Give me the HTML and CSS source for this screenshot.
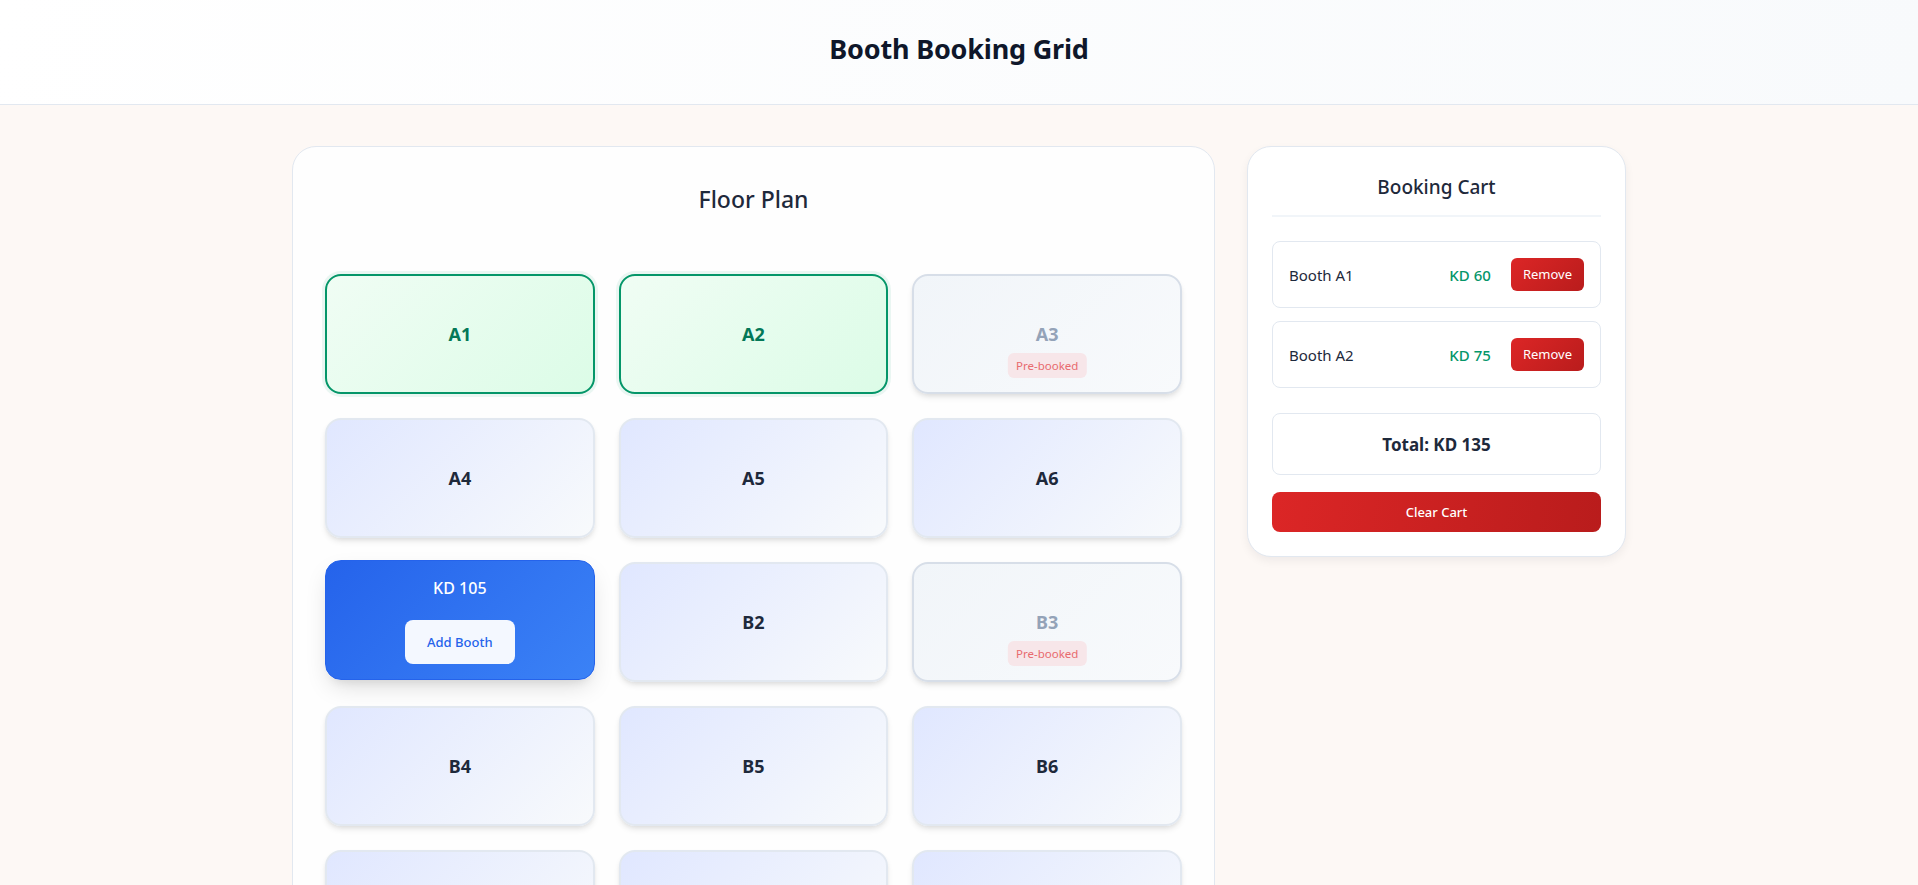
FILE: index.html
```html
<!DOCTYPE html>
<html lang="en">
<head>
<meta charset="utf-8">
<title>Booth Booking Grid</title>
<link rel="stylesheet" href="styles.css">
</head>
<body>
<header class="topbar">
  <h1 class="topbar-title">Booth Booking Grid</h1>
</header>
<main class="layout">
  <section class="floor">
    <h2 class="floor-title">Floor Plan</h2>
    <div class="booth-grid">
      <div class="booth booth-added"><span class="booth-label">A1</span></div>
      <div class="booth booth-added"><span class="booth-label">A2</span></div>
      <div class="booth booth-pre"><span class="booth-label">A3</span><span class="badge">Pre-booked</span></div>
      <div class="booth"><span class="booth-label">A4</span></div>
      <div class="booth"><span class="booth-label">A5</span></div>
      <div class="booth"><span class="booth-label">A6</span></div>
      <div class="booth booth-active">
        <span class="booth-price">KD 105</span>
        <button class="add-btn">Add Booth</button>
      </div>
      <div class="booth"><span class="booth-label">B2</span></div>
      <div class="booth booth-pre"><span class="booth-label">B3</span><span class="badge">Pre-booked</span></div>
      <div class="booth"><span class="booth-label">B4</span></div>
      <div class="booth"><span class="booth-label">B5</span></div>
      <div class="booth"><span class="booth-label">B6</span></div>
      <div class="booth"><span class="booth-label">C1</span></div>
      <div class="booth"><span class="booth-label">C2</span></div>
      <div class="booth"><span class="booth-label">C3</span></div>
    </div>
  </section>
  <aside class="cart">
    <h3 class="cart-title">Booking Cart</h3>
    <div class="cart-list">
      <div class="cart-item">
        <span class="cart-name">Booth A1</span>
        <div class="cart-right">
          <span class="cart-price">KD 60</span>
          <button class="remove-btn">Remove</button>
        </div>
      </div>
      <div class="cart-item">
        <span class="cart-name">Booth A2</span>
        <div class="cart-right">
          <span class="cart-price">KD 75</span>
          <button class="remove-btn">Remove</button>
        </div>
      </div>
    </div>
    <div class="cart-total">Total: KD 135</div>
    <button class="clear-btn">Clear Cart</button>
  </aside>
</main>
</body>
</html>
```
FILE: styles.css
```css
* { box-sizing: border-box; }

body {
  margin: 0;
  background: #fdf8f5;
  font-family: "Noto Sans", "Open Sans", sans-serif;
  color: #1e293b;
}

.topbar {
  height: 105px;
  padding-bottom: 8px;
  display: flex;
  align-items: center;
  justify-content: center;
  background: linear-gradient(100deg, #ffffff 0%, #f8fafc 100%);
  border-bottom: 1px solid #e2e8f0;
}

.topbar-title {
  margin: 0;
  font-size: 27px;
  font-weight: 700;
  color: #0f172a;
  letter-spacing: -0.2px;
}

.layout {
  max-width: 1334px;
  margin: 0 auto;
  padding: 41px 0;
  display: grid;
  grid-template-columns: 1fr 379px;
  gap: 32px;
  align-items: start;
}

.floor {
  background: #fefefe;
  border: 1px solid #e2e8f0;
  border-radius: 24px;
  padding: 32px;
}

.floor-title {
  margin: 0 0 57px;
  padding-top: 2px;
  text-align: center;
  font-size: 23px;
  line-height: 36px;
  font-weight: 500;
  color: #1e293b;
}

.booth-grid {
  display: grid;
  grid-template-columns: repeat(3, 1fr);
  gap: 24px;
}

.booth {
  position: relative;
  height: 120px;
  border-radius: 16px;
  border: 2px solid #e2e8f0;
  background: linear-gradient(135deg, #e0e7ff 0%, #f8fafc 100%);
  box-shadow: 0 4px 6px -1px rgba(0, 0, 0, 0.1), 0 2px 4px -1px rgba(0, 0, 0, 0.05);
  display: flex;
  flex-direction: column;
  align-items: center;
  justify-content: center;
}

.booth-label {
  font-size: 18px;
  font-weight: 700;
  color: #1e293b;
  line-height: 26px;
}

.booth-added {
  border-color: #059669;
  background: linear-gradient(135deg, #f0fdf4 0%, #dcfce7 100%);
  box-shadow: 0 0 0 3px rgba(5, 150, 105, 0.08);
}

.booth-added .booth-label { color: #047857; }

.booth-pre {
  border-color: #d7dee8;
  background: linear-gradient(135deg, #f1f5f9 0%, #f8fafc 100%);
}

.booth-pre .booth-label { color: #94a3b8; }

.badge {
  position: absolute;
  left: 50%;
  bottom: 14px;
  transform: translateX(-50%);
  font-size: 11.5px;
  line-height: 15px;
  padding: 5px 8px;
  border-radius: 6px;
  background: #f7e6e9;
  color: #e86a6e;
  white-space: nowrap;
}

.booth-active {
  border: 1px solid #2563eb;
  background: linear-gradient(135deg, #2563eb 0%, #3b82f6 100%);
  box-shadow: 0 10px 25px -5px rgba(0, 0, 0, 0.15), 0 8px 10px -6px rgba(0, 0, 0, 0.08);
  transform: translateY(-2px);
  gap: 20px;
}

.booth-price {
  font-size: 16px;
  line-height: 24px;
  font-weight: 500;
  color: #ffffff;
}

.add-btn {
  font-family: inherit;
  font-size: 13px;
  line-height: 20px;
  padding: 12px 22px;
  border: none;
  border-radius: 8px;
  background: rgba(255, 255, 255, 0.95);
  color: #2563eb;
  font-weight: 500;
}

.cart {
  background: #ffffff;
  border: 1px solid #e2e8f0;
  border-radius: 24px;
  padding: 24px;
  box-shadow: 0 4px 10px rgba(15, 23, 42, 0.06);
}

.cart-title {
  margin: 0 0 24px;
  padding-bottom: 12px;
  border-bottom: 2px solid #f1f5f9;
  text-align: center;
  font-size: 19px;
  line-height: 32px;
  font-weight: 500;
  color: #1e293b;
}

.cart-list {
  display: flex;
  flex-direction: column;
  gap: 13px;
  margin-bottom: 25px;
}

.cart-item {
  height: 67px;
  border: 1px solid #e2e8f0;
  border-radius: 8px;
  padding: 0 16px;
  display: flex;
  align-items: center;
  justify-content: space-between;
}

.cart-name {
  font-size: 15px;
  color: #1e293b;
}

.cart-right {
  display: flex;
  align-items: center;
  gap: 20px;
}

.cart-price {
  font-size: 15px;
  font-weight: 500;
  color: #059669;
}

.remove-btn {
  font-family: inherit;
  font-size: 13px;
  line-height: 19px;
  padding: 7px 12px;
  border: none;
  border-radius: 6px;
  background: linear-gradient(135deg, #dc2626 0%, #b91c1c 100%);
  color: #ffffff;
}

.cart-total {
  height: 62px;
  border: 1px solid #e2e8f0;
  border-radius: 8px;
  display: flex;
  align-items: center;
  justify-content: center;
  font-size: 17px;
  font-weight: 700;
  color: #1e293b;
}

.clear-btn {
  display: block;
  width: 100%;
  height: 40px;
  margin-top: 17px;
  font-family: inherit;
  font-size: 13px;
  font-weight: 500;
  border: none;
  border-radius: 8px;
  background: linear-gradient(100deg, #dc2626 0%, #b91c1c 100%);
  color: #ffffff;
}
```
